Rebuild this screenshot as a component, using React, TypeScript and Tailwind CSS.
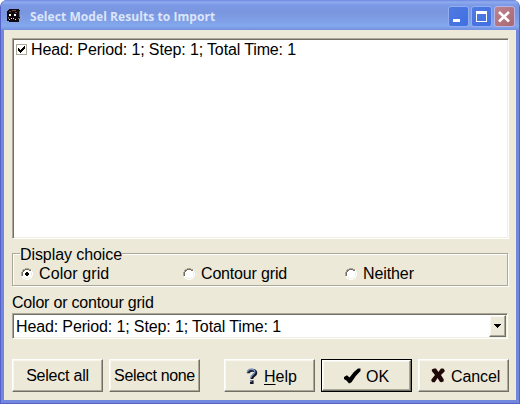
import type { ReactNode } from 'react';

const raised =
  'border border-t-white border-l-white border-r-[#716f64] border-b-[#716f64] shadow-[inset_-1px_-1px_0_#aca899,inset_1px_1px_0_#f8f6ee]';
const sunken =
  'border border-t-[#aca899] border-l-[#aca899] border-r-white border-b-white shadow-[inset_1px_1px_0_#716f64,inset_-1px_-1px_0_#f1efe2]';

function AppIcon() {
  return (
    <svg width="17" height="16" viewBox="0 0 17 16" className="mt-[2px]" shapeRendering="crispEdges">
      <path d="M2 1h10v1h1v9h-1v3H2v-1H0V3h1V2h1z" fill="#120a0e" />
      <path d="M12 3h1v6h-1zM11 10h3v1h-3z" fill="#59626f" />
      <path d="M14 7h1v3h-1zM13 10h1v1h-1zM12 11h1v1h-1z" fill="#9aa6ba" />
      <path d="M2 6h2v2H2zM7 6h2v2H7z" fill="#fff" />
      <path d="M4 10h1v1H4zM6 10h1v1H6zM2 11h1v1H2zM8 11h1v1H8z" fill="#e8d8d4" />
      <path d="M2 3h2v1H2zM5 2h4v1H5zM1 9h1v2H1zM8 4h2v1H8z" fill="#6a4844" />
    </svg>
  );
}

function CaptionButton({ close, children }: { close?: boolean; children: ReactNode }) {
  return (
    <div
      className={`h-[21px] w-[21px] rounded-[3px] border ${
        close
          ? 'border-[#b9b4e6] bg-linear-to-br from-[#bd8490] to-[#a96672]'
          : 'border-[#90aef0] bg-linear-to-br from-[#4f7ae0] to-[#3f6fe2]'
      }`}
    >
      <svg width="19" height="19" viewBox="0 0 19 19" shapeRendering="crispEdges">
        {children}
      </svg>
    </div>
  );
}

function Radio({ label, checked, tracking }: { label: string; checked?: boolean; tracking: string }) {
  return (
    <div className="flex w-[162px] items-center">
      <svg width="12" height="12" viewBox="0 0 12 12" className="mr-[6px]" shapeRendering="crispEdges">
        <path d="M4 0h4v1h2v1h1v2h1v4h-1v2h-1v1H8v1H4v-1H2v-1H1V8H0V4h1V2h1V1h2z" fill="#fff" />
        <path d="M4 0h4v1h2v1H8V1H4v1H2v2H1v4H0V4h1V2h1V1h2z" fill="#aca899" />
        <path d="M4 1h4v1H4zM2 2h2v1H3v1H2zM1 4h1v4H1zM8 2h2v1H8z" fill="#716f64" />
        <path d="M10 4h1v4h-1zM8 9h2v1H8zM4 10h4v1H4zM2 9h2v1H2z" fill="#f1efe2" />
        {checked && <path d="M5 4h2v1h1v2H7v1H5V7H4V5h1z" fill="#000" />}
      </svg>
      <span className={`leading-[18px] ${tracking}`}>{label}</span>
    </div>
  );
}

function Button({ primary, icon, children, className = '' }: { primary?: boolean; icon?: ReactNode; children: ReactNode; className?: string }) {
  return (
    <button className={`h-[33px] w-[91px] shrink-0 ${primary ? 'border border-black' : ''}`}>
      <div className={`flex h-full w-full items-center ${raised} ${className}`}>
        {icon}
        <span className={`leading-[18px] ${icon ? 'pt-[2px]' : ''}`}>{children}</span>
      </div>
    </button>
  );
}

export default function App() {
  return (
    <div className="h-[404px] w-[520px] bg-white font-['Liberation_Sans',Arial,sans-serif] text-[16px] text-black">
      <div className="flex h-full w-full flex-col overflow-hidden rounded-t-[7px] border-r border-b border-l border-[#5560c8] bg-[#7288dc] whitespace-nowrap">
        <header className="flex h-[30px] shrink-0 items-center bg-[linear-gradient(to_bottom,#6c86df_0,#8fabef_2px,#7c99e6_5px,#7a96df_12px,#7e9ee6_20px,#84a9ed_26px,#7590e0_30px)] pr-[4px] pl-[6px]">
          <AppIcon />
          <h1 className="ml-[6px] pt-[4px] font-['Open_Sans',sans-serif] text-[12px] leading-[18px] font-bold tracking-[0.07px] text-[#dce5fa]">
            Select Model Results to Import
          </h1>
          <div className="mt-[3px] ml-auto flex gap-[2px]">
            <CaptionButton>
              <path d="M4 12h7v3H4z" fill="#fff" />
            </CaptionButton>
            <CaptionButton>
              <path d="M4 4h11v11H4zM5 7v7h9V7z" fill="#fff" fillRule="evenodd" />
            </CaptionButton>
            <CaptionButton close>
              <path d="M4 5l10 9.5M14 5l-10 9.5" stroke="#fff" strokeWidth="2.6" shapeRendering="auto" />
            </CaptionButton>
          </div>
        </header>

        <main className="mx-[3px] mb-[3px] flex flex-1 flex-col bg-[#ece9d8] pt-[8px] pl-[8px]">
          <div className={`h-[201px] w-[497px] shrink-0 bg-white pt-[1px] pl-[3px] ${sunken}`}>
            <div className="flex h-[19px] items-center">
              <svg width="11" height="11" viewBox="0 0 11 11" shapeRendering="crispEdges">
                <path d="M0 0h11v11H0z" fill="#aca899" />
                <path d="M1 1h9v9H1z" fill="#fff" />
                <path d="M2 4h1v1h1v1h1V5h1V4h1V3h1V2h1v3H8v1H7v1H6v1H5v1H4V8H3V7H2z" fill="#000" />
              </svg>
              <span className="ml-[4px] leading-[18px] tracking-[-0.13px]">Head: Period: 1; Step: 1; Total Time: 1</span>
            </div>
          </div>

          <fieldset className="mt-[5px] h-[43px] w-[495px] shrink-0">
            <div className="mt-[9px] h-[33px] border border-[#aca899] shadow-[1px_1px_0_#fff,inset_1px_1px_0_#fff]">
              <div className="-mt-[8px] ml-[7px] h-[17px] w-fit bg-[#ece9d8] leading-[18px] tracking-[-0.08px]">Display choice</div>
              <div className="mt-[2px] flex pl-[8px]">
                <Radio label="Color grid" checked tracking="tracking-[0.1px]" />
                <Radio label="Contour grid" tracking="tracking-[-0.17px]" />
                <Radio label="Neither" tracking="tracking-[-0.1px]" />
              </div>
            </div>
          </fieldset>

          <label className="mt-[7px] h-[18px] shrink-0 leading-[18px] tracking-[-0.2px]">Color or contour grid</label>
          <div className={`mt-[1px] flex h-[26px] w-[496px] shrink-0 items-center justify-between bg-white p-[1px] pl-[3px] ${sunken}`}>
            <span className="pt-[2px] leading-[18px] tracking-[-0.13px]">Head: Period: 1; Step: 1; Total Time: 1</span>
            <div className={`flex h-[22px] w-[17px] items-center justify-center bg-[#ece9d8] ${raised}`}>
              <svg width="7" height="4" viewBox="0 0 7 4" shapeRendering="crispEdges">
                <path d="M0 0h7v1H6v1H5v1H4v1H3V3H2V2H1V1H0z" />
              </svg>
            </div>
          </div>

          <footer className="mt-[20px] flex">
            <Button className="justify-center tracking-[-0.22px]">Select all</Button>
            <div className="w-[6px]" />
            <Button className="justify-center tracking-[-0.33px]">Select none</Button>
            <div className="w-[24px]" />
            <Button
              className="gap-[6px] pl-[21px]"
              icon={
                <svg width="12" height="16" viewBox="0 0 12 16">
                  <path d="M2.3 5.2C2.2 1.6 9.8 1 9.8 4.9c0 2.8-4 2.6-4 6" fill="none" stroke="#171b26" strokeWidth="3" />
                  <path d="M1.4 4.6C1.4 .4 8.8 .2 8.8 3.8c0 2.6-4 2.6-4 6" fill="none" stroke="#7893c5" strokeWidth="1.5" />
                  <path d="M4 12.4h3.6V16H4z" fill="#171b26" />
                  <path d="M4 12.4h1.8v1.6H4z" fill="#7893c5" />
                </svg>
              }
            >
              <u className="decoration-1 underline-offset-2">H</u>elp
            </Button>
            <div className="w-[6px]" />
            <Button
              primary
              className="gap-[5px] pl-[21px]"
              icon={
                <svg width="17" height="16" viewBox="0 0 17 16">
                  <path d="M0 9l3-1.8 2.5 2.3Q9 4 14 .6h2.5V3Q11 8 7.5 14.2L5 15.5Q3 12 0 11z" />
                </svg>
              }
            >
              OK
            </Button>
            <div className="w-[6px]" />
            <Button
              className="gap-[6px] pl-[12px] tracking-[-0.1px]"
              icon={
                <svg width="14" height="15" viewBox="0 0 14 15">
                  <path d="M.8 1.5L3 .6h2L7.4 4 10 .4h2.2L13.6 2v1.6L10 7l2.8 4.4-.3 2-2.2.8-1.4-.4L6.6 10l-2.8 4.2H1.6L.4 13v-1.6L4 7 .9 3.2z" fill="#210808" />
                </svg>
              }
            >
              Cancel
            </Button>
          </footer>
        </main>
      </div>
    </div>
  );
}
